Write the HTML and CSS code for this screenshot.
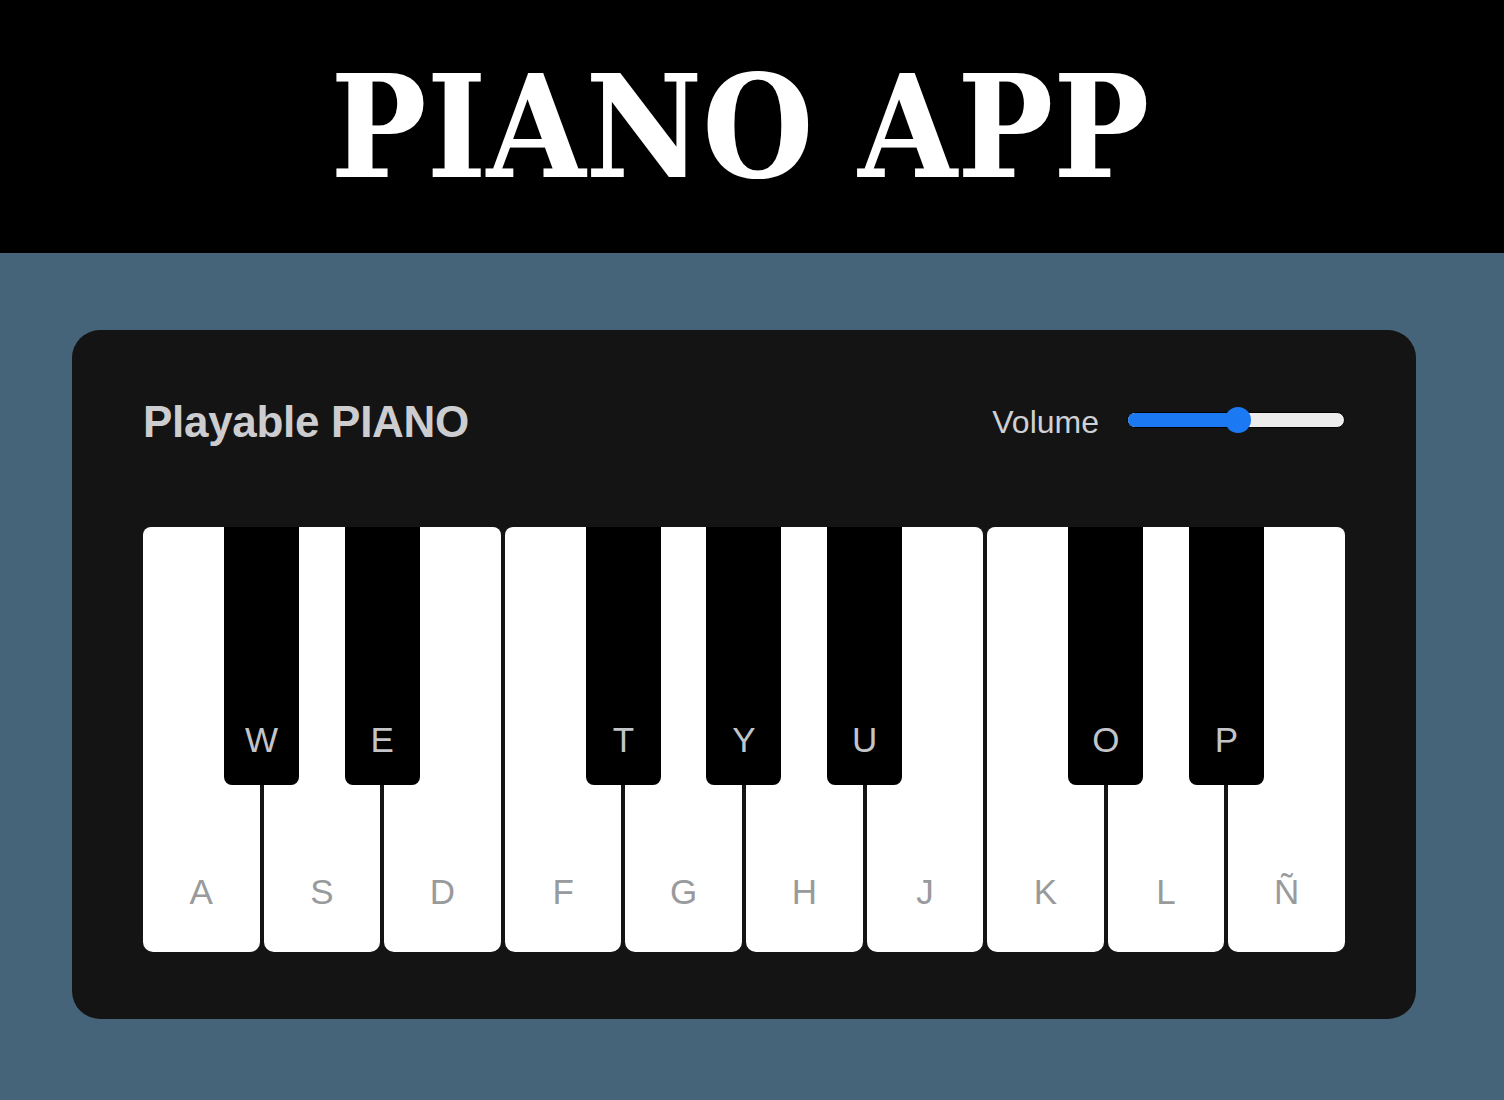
FILE: index.html
```html
<!DOCTYPE html>
<html lang="es">
<head>
<meta charset="utf-8">
<title>Piano App</title>
<link rel="stylesheet" href="styles.css">
</head>
<body>
<header class="banner">
  <h1 class="banner-title">PIANO APP</h1>
</header>
<main class="stage">
  <section class="piano-card">
    <div class="card-head">
      <h2 class="card-title">Playable PIANO</h2>
      <label class="volume">
        <span class="volume-label">Volume</span>
        <span class="slider">
          <span class="slider-fill" style="width: 51%"></span>
          <span class="slider-thumb" style="left: 51%"></span>
        </span>
      </label>
    </div>
    <div class="keyboard">
      <div class="white-key"><span class="key-label">A</span><div class="black-key"><span class="key-label">W</span></div></div>
      <div class="white-key"><span class="key-label">S</span><div class="black-key"><span class="key-label">E</span></div></div>
      <div class="white-key"><span class="key-label">D</span></div>
      <div class="white-key"><span class="key-label">F</span><div class="black-key"><span class="key-label">T</span></div></div>
      <div class="white-key"><span class="key-label">G</span><div class="black-key"><span class="key-label">Y</span></div></div>
      <div class="white-key"><span class="key-label">H</span><div class="black-key"><span class="key-label">U</span></div></div>
      <div class="white-key"><span class="key-label">J</span></div>
      <div class="white-key"><span class="key-label">K</span><div class="black-key"><span class="key-label">O</span></div></div>
      <div class="white-key"><span class="key-label">L</span><div class="black-key"><span class="key-label">P</span></div></div>
      <div class="white-key"><span class="key-label">Ñ</span></div>
    </div>
  </section>
</main>
</body>
</html>
```
FILE: styles.css
```css
* { box-sizing: border-box; }

html, body {
  margin: 0;
  padding: 0;
}

body {
  background: #456479;
  font-family: "Liberation Sans", Arial, sans-serif;
  width: 1504px;
  height: 1100px;
  overflow: hidden;
}

.banner {
  background: #000;
  height: 253px;
  display: flex;
  align-items: center;
  justify-content: center;
}

.banner-title {
  margin: 0 0 0 -24px;
  color: #fff;
  font-family: "DejaVu Serif Condensed", "DejaVu Serif", serif;
  font-stretch: condensed;
  font-weight: bold;
  font-size: 142px;
  line-height: 1;
  letter-spacing: 0;
}

.stage {
  padding: 77px 0 0 72px;
}

.piano-card {
  width: 1344px;
  height: 689px;
  background: #141414;
  border-radius: 28px;
  padding: 66px 71px 67px 71px;
  display: flex;
  flex-direction: column;
}

.card-head {
  display: flex;
  align-items: center;
  justify-content: space-between;
  height: 53px;
}

.card-title {
  margin: 0;
  font-size: 44px;
  line-height: 1.2;
  font-weight: bold;
  color: #cdcdd0;
  letter-spacing: -0.3px;
}

.volume {
  display: flex;
  align-items: center;
  gap: 28px;
}

.volume-label {
  font-size: 32px;
  line-height: 1.2;
  color: #cfd0d4;
}

.slider {
  position: relative;
  width: 218px;
  height: 16px;
  border-radius: 8px;
  background: #ececec;
  border: 1px solid #000;
  margin-top: -4px;
}

.slider-fill {
  position: absolute;
  left: 0;
  top: 0;
  bottom: 0;
  background: #1a79f3;
  border-radius: 8px 0 0 8px;
}

.slider-thumb {
  position: absolute;
  top: 50%;
  width: 26px;
  height: 26px;
  margin: -13px 0 0 -13px;
  border-radius: 50%;
  background: #1a79f3;
}

.keyboard {
  margin-top: 78px;
  display: grid;
  grid-template-columns: repeat(10, 1fr);
  gap: 4px;
  height: 425px;
}

.white-key {
  position: relative;
  background: #fff;
  border-radius: 8px 8px 10px 10px;
  display: flex;
  justify-content: center;
  align-items: flex-end;
  padding-bottom: 43px;
}

.white-key > .key-label {
  font-size: 35px;
  line-height: 1;
  color: #999a9c;
}

.black-key {
  position: absolute;
  top: 0;
  right: -39.5px;
  width: 75px;
  height: 258px;
  background: #000;
  border-radius: 0 0 8px 8px;
  z-index: 2;
  display: flex;
  justify-content: center;
  align-items: flex-end;
  padding-bottom: 28px;
}

.black-key > .key-label {
  font-size: 35px;
  line-height: 1;
  color: #c2c4c8;
}
```
